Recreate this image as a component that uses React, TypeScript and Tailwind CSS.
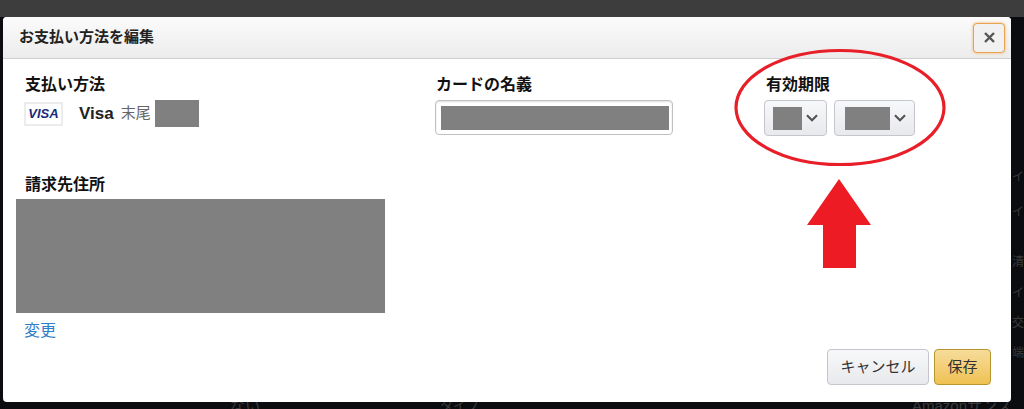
const jp = "font-['Liberation_Sans','Noto_Sans_CJK_JP',sans-serif]";

function Chevron() {
  return (
    <svg width="12" height="8" viewBox="0 0 12 8" fill="none" stroke="#555" strokeWidth="2.2">
      <path d="M1 1.2 L6 6.2 L11 1.2" />
    </svg>
  );
}

function Select({ width, boxWidth, ml }: { width: string; boxWidth: string; ml: string }) {
  return (
    <div className={`flex h-[36px] items-center rounded-[4px] border border-[#c4c6cc] bg-gradient-to-b from-[#f7f8fa] to-[#e7e9ec] ${width} ${ml}`}>
      <div className={`h-[23px] bg-[#808080] ${boxWidth}`} />
      <div className="ml-[4px]">
        <Chevron />
      </div>
    </div>
  );
}

export default function App() {
  return (
    <div className={`relative h-[409px] w-[1024px] overflow-hidden bg-[#0a0c10] ${jp}`}>
      <div className="h-[17px] bg-[#3d3d3d]" />
      {/* page text showing behind the dialog */}
      <div className="absolute left-[1012px] top-[167px] flex flex-col text-[12px] leading-[20px] text-[#3a3a3a]">
        <span>イ</span>
        <span className="mt-[15px]">イ</span>
        <span className="mt-[30px]">清</span>
        <span className="mt-[11px]">イ</span>
        <span className="mt-[10px]">交</span>
        <span className="mt-[10px]">端</span>
      </div>
      <div className="absolute left-[230px] top-[396px] text-[15px] leading-[20px] text-[#3a3a3a]">ない</div>
      <div className="absolute left-[440px] top-[396px] text-[13px] leading-[20px] text-[#3a3a3a]">タイプ</div>
      <div className="absolute left-[912px] top-[396px] text-[15px] leading-[20px] text-[#3a3a3a]">Amazonサンス</div>

      <div className="absolute left-[3px] top-[17px] flex h-[385px] w-[1008px] flex-col overflow-hidden rounded-[4px] bg-white">
        <div className="flex h-[42px] shrink-0 items-center justify-between border-b border-[#d0d0d0] bg-gradient-to-b from-[#fbfbfb] to-[#ececec] pl-[16px] pr-[6px]">
          <h1 className="text-[15px] font-bold text-[#222]">お支払い方法を編集</h1>
          <div className="flex h-[30px] w-[32px] items-center justify-center rounded-[4px] border border-[#e7a24e] bg-[#f1f1f1] shadow-[0_0_3px_#f0b060]">
            <svg width="11" height="11" viewBox="0 0 11 11" stroke="#555" strokeWidth="2.4">
              <path d="M1 1 L10 10 M10 1 L1 10" />
            </svg>
          </div>
        </div>

        <div className="flex flex-1 flex-col">
          <div className="flex h-[116px] shrink-0 pt-[16px]">
            <div className="w-[432px] shrink-0 pl-[21px]">
              <div className="pl-[1px] text-[16px] font-bold leading-[20px] text-[#111]">支払い方法</div>
              <div className="mt-[5px] flex items-center">
                <div className="flex h-[24px] w-[39px] items-center justify-center border-2 border-[#ececec] text-[13px] font-bold italic text-[#1a2a7c]">
                  VISA
                </div>
                <span className="ml-[16px] text-[17px] font-bold text-[#222]">Visa</span>
                <span className="ml-[7px] text-[15px] text-[#666]">末尾</span>
                <div className="ml-[4px] h-[27px] w-[44px] bg-[#808080]" />
              </div>
            </div>
            <div className="w-[331px] shrink-0">
              <div className="pl-[1px] text-[16px] font-bold leading-[20px] text-[#111]">カードの名義</div>
              <div className="mt-[5px] flex h-[35px] w-[238px] items-center rounded-[4px] border border-[#c0c0c0] pl-[5px] shadow-[inset_0_1px_2px_#ddd]">
                <div className="h-[24px] w-[228px] bg-[#808080]" />
              </div>
            </div>
            <div>
              <div className="text-[16px] font-bold leading-[20px] text-[#111]">有効期限</div>
              <div className="mt-[5px] flex">
                <Select width="w-[63px]" boxWidth="w-[29px] ml-[8px]" ml="-ml-[2px]" />
                <Select width="w-[81px]" boxWidth="w-[45px] ml-[10px]" ml="ml-[7px]" />
              </div>
            </div>
          </div>

          <div className="pl-[22px] text-[16px] font-bold leading-[20px] text-[#111]">請求先住所</div>
          <div className="ml-[13px] mt-[4px] h-[114px] w-[369px] bg-[#808080]" />
          <a className="ml-[21px] mt-[8px] text-[16px] leading-[20px] text-[#2f80c8]">変更</a>

          <div className="mt-[8px] flex justify-end gap-[5px] pr-[20px]">
            <button className="h-[36px] w-[102px] rounded-[4px] border border-[#c4c6cc] bg-gradient-to-b from-[#f7f8fa] to-[#e7e9ec] text-[15px] text-[#333]">
              キャンセル
            </button>
            <button className="h-[36px] w-[57px] rounded-[4px] border border-[#b8962e] bg-gradient-to-b from-[#f6dc9a] to-[#efc14f] text-[15px] text-[#333]">
              保存
            </button>
          </div>
        </div>
      </div>

      {/* annotations drawn over the screenshot */}
      <svg className="absolute left-0 top-0" width="1024" height="409" fill="none">
        <ellipse cx="840" cy="107.5" rx="104" ry="57" stroke="#e81f28" strokeWidth="3.2" />
        <path d="M839 179 L871 225 L856 225 L856 268 L823 268 L823 225 L807 225 Z" fill="#ed1c24" />
      </svg>
    </div>
  );
}
